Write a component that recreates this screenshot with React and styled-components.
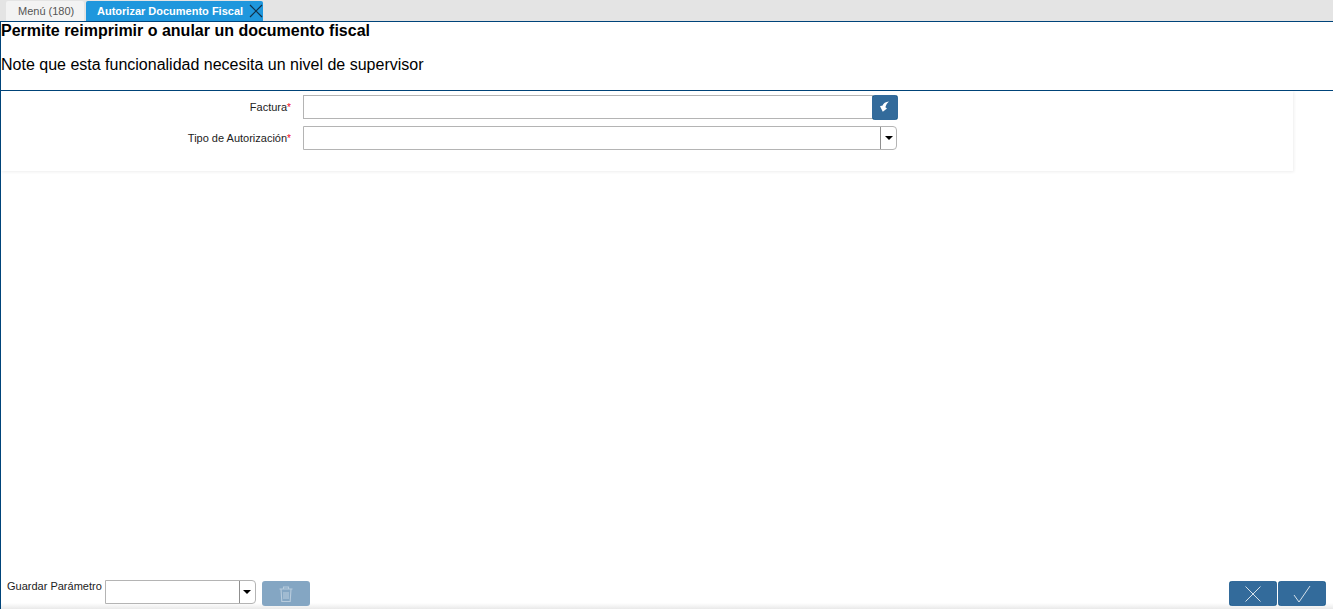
import React from 'react';
import styled, { createGlobalStyle, css } from 'styled-components';

const GlobalStyle = createGlobalStyle`
  html, body {
    margin: 0;
    padding: 0;
    height: 100%;
    overflow: hidden;
    background: #fff;
    font-family: "Liberation Sans", Arial, sans-serif;
  }
`;

// square corners show through a darker colour, as on the original buttons
const darkCorners = css`
  background-color: #1b5c8c;
  background-image: linear-gradient(#336b9b, #336b9b), linear-gradient(#336b9b, #336b9b);
  background-size: 100% calc(100% - 4px), calc(100% - 4px) 100%;
  background-position: center;
  background-repeat: no-repeat;
`;

const Page = styled.div`
  height: 609px;
  display: flex;
  flex-direction: column;
  box-sizing: border-box;
  border-left: 1px solid #00447a;
`;

const TabBar = styled.div`
  height: 22px;
  flex: none;
  box-sizing: border-box;
  display: flex;
  align-items: flex-end;
  gap: 2px;
  padding-left: 6px;
  background: #e4e4e4;
  border-bottom: 1px solid #00447a;
  margin-left: -1px;
`;

const Tab = styled.div`
  height: 20px;
  box-sizing: border-box;
  display: flex;
  align-items: center;
  white-space: nowrap;
  font-size: 11px;
  border-radius: 2px 2px 0 0;
  padding-left: ${p => (p.$active ? '11px' : '12px')};
  width: ${p => (p.$active ? '177px' : '78px')};
  background: ${p => (p.$active ? '#1f97dd' : '#f3f3f3')};
  color: ${p => (p.$active ? '#fff' : '#555')};
  font-weight: ${p => (p.$active ? 700 : 400)};
`;

const TabClose = styled.svg`
  width: 14px;
  height: 14px;
  margin-left: 6px;
  flex: none;
`;

const Header = styled.div`
  height: 69px;
  flex: none;
  box-sizing: border-box;
  border-bottom: 1px solid #00447a;
  color: #000;
`;

const Title = styled.div`
  font-size: 16px;
  font-weight: 700;
  line-height: 18px;
`;

const Note = styled.div`
  font-size: 16px;
  line-height: 18px;
  margin-top: 16px;
`;

const FormPanel = styled.div`
  width: 1292px;
  height: 80px;
  box-sizing: border-box;
  padding-top: 4px;
  flex: none;
  box-shadow: 1px 1px 3px rgba(0, 0, 0, 0.07);
  display: flex;
  flex-direction: column;
  gap: 7px;
`;

const Row = styled.div`
  display: flex;
  align-items: center;
  height: 24px;
`;

const Label = styled.label`
  width: 290px;
  flex: none;
  text-align: right;
  font-size: 11px;
  color: #222;
  margin-right: 12px;
`;

const Required = styled.span`
  color: #f0081c;
  font-size: 10px;
`;

const Input = styled.div`
  width: ${p => p.$width}px;
  height: 24px;
  box-sizing: border-box;
  border: 1px solid #b4b4b4;
  background: #fff;
`;

const SearchButton = styled.div`
  width: 26px;
  height: 25px;
  margin-left: -1px;
  display: flex;
  align-items: center;
  justify-content: center;
  border-radius: 3px;
  ${darkCorners}
`;

const Combo = styled.div`
  width: ${p => p.$width}px;
  height: 24px;
  box-sizing: border-box;
  display: flex;
  border: 1px solid #b4b4b4;
  border-radius: 0 4px 4px 0;
  background: #fff;
`;

const ComboField = styled.div`
  flex: 1;
`;

const ComboArrow = styled.div`
  width: 15px;
  display: flex;
  align-items: center;
  justify-content: center;
  border-left: 1px solid #8f8f8f;
  &::after {
    content: "";
    border-left: 4px solid transparent;
    border-right: 4px solid transparent;
    border-top: 4px solid #000;
  }
`;

const Footer = styled.div`
  margin-top: auto;
  height: 39px;
  flex: none;
  box-sizing: border-box;
  padding: 10px 7px 0 6px;
  display: flex;
  align-items: flex-start;
  background: linear-gradient(to bottom, #fff 0, #fff 33px, #e9e9e9 39px);
`;

const SaveLabel = styled.span`
  font-size: 11px;
  color: #222;
  line-height: 13px;
  margin-right: 3px;
`;

const IconButton = styled.div`
  height: 25px;
  width: 48px;
  margin-top: 1px;
  margin-left: ${p => p.$gap || 0}px;
  display: flex;
  align-items: center;
  justify-content: center;
  border-radius: 3px;
  ${p => (p.$disabled ? 'background: #84a6c3;' : darkCorners)}
`;

const FooterActions = styled.div`
  margin-left: auto;
  display: flex;
  gap: 1px;
`;

const App = () => (
  <Page>
    <GlobalStyle />
    <TabBar>
      <Tab>Menú (180)</Tab>
      <Tab $active>
        Autorizar Documento Fiscal
        <TabClose viewBox="0 0 14 14">
          <path d="M1 1l12 12M13 1L1 13" stroke="#12314a" strokeWidth="1.2" fill="none" />
        </TabClose>
      </Tab>
    </TabBar>
    <Header>
      <Title>Permite reimprimir o anular un documento fiscal</Title>
      <Note>Note que esta funcionalidad necesita un nivel de supervisor</Note>
    </Header>
    <FormPanel>
      <Row>
        <Label>Factura<Required>*</Required></Label>
        <Input $width={570} />
        <SearchButton>
          <svg width="12" height="12" viewBox="0 0 12 12">
            <path d="M10 .5C6.5.8 4.4 2.4 3.6 4.6L1 5.2l2.8 5.6L8 7.4 6.4 6.3C6.9 4 8.2 2 10 .5z" fill="#fff" />
          </svg>
        </SearchButton>
      </Row>
      <Row>
        <Label>Tipo de Autorización<Required>*</Required></Label>
        <Combo $width={594}>
          <ComboField />
          <ComboArrow />
        </Combo>
      </Row>
    </FormPanel>
    <Footer>
      <SaveLabel>Guardar Parámetro</SaveLabel>
      <Combo $width={151}>
        <ComboField />
        <ComboArrow />
      </Combo>
      <IconButton $gap={6} $disabled>
        <svg width="18" height="18" viewBox="0 0 18 18" fill="none" stroke="#b8ccdd" strokeWidth="1.1">
          <path d="M2.5 4h13M6.5 4V2h5v2M4 4l.8 12.5h8.4L14 4M7 7v7M9 7v7M11 7v7" />
        </svg>
      </IconButton>
      <FooterActions>
        <IconButton>
          <svg width="18" height="18" viewBox="0 0 18 18">
            <path d="M1.5 1.5l15 15M16.5 1.5l-15 15" stroke="#d5e1ea" strokeWidth="1" fill="none" />
          </svg>
        </IconButton>
        <IconButton>
          <svg width="18" height="18" viewBox="0 0 18 18">
            <path d="M1 10l5 7L17 1" stroke="#d5e1ea" strokeWidth="1" fill="none" />
          </svg>
        </IconButton>
      </FooterActions>
    </Footer>
  </Page>
);

export default App;
